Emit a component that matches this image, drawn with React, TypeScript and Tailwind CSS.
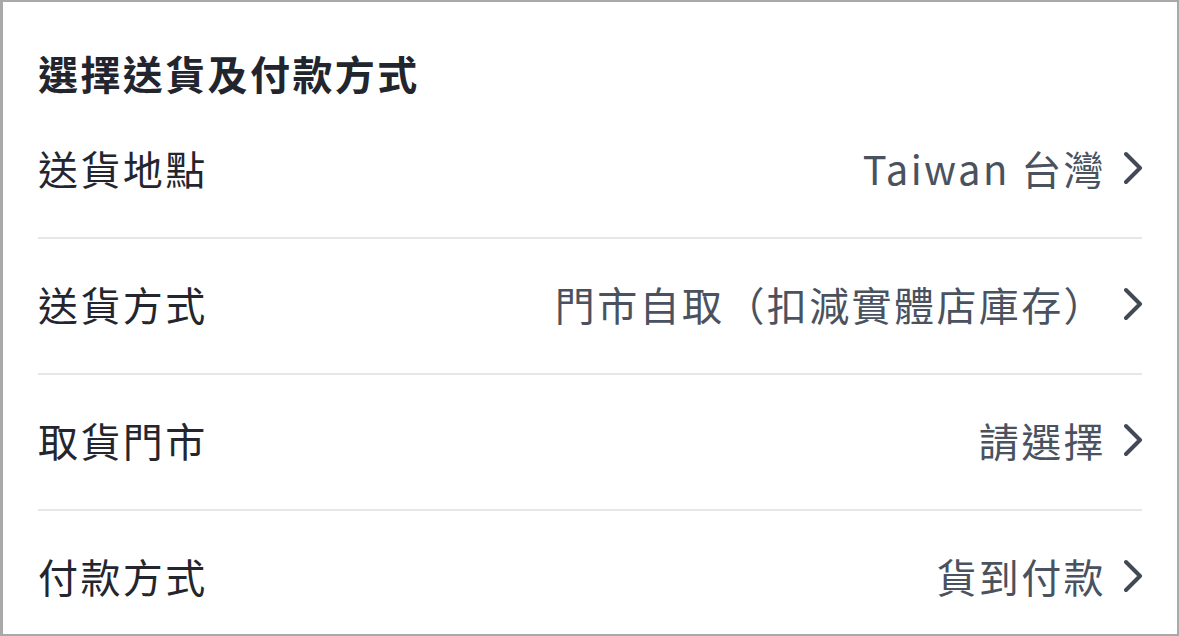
import React from 'react'

const rows = [
  { label: '送貨地點', value: 'Taiwan 台灣' },
  { label: '送貨方式', value: '門市自取（扣減實體店庫存）' },
  { label: '取貨門市', value: '請選擇' },
  { label: '付款方式', value: '貨到付款' },
]

const Chevron: React.FunctionComponent = () => (
  <svg width="20" height="34" viewBox="0 0 20 34" fill="none" className="shrink-0">
    <polyline points="2,3 16,17 2,31" stroke="#434a56" strokeWidth="4" strokeLinecap="round" strokeLinejoin="round" />
  </svg>
)

const App: React.FunctionComponent = () => {
  return (
    <main
      className="w-[1179px] h-[636px] overflow-hidden bg-white border-[#a9a9a9] border-t-2 border-r-2 border-b-2 border-l-[3px] pl-[35px] pr-[33px]"
      style={{ fontFamily: '"Noto Sans CJK TC", "Noto Sans", sans-serif' }}
    >
      <h1 className="pt-[43px] pb-[2px] text-[40px] leading-[56px] font-bold tracking-[2.4px] text-[#22252e]">
        選擇送貨及付款方式
      </h1>
      <div className="flex flex-col">
        {rows.map((row) => (
          <div key={row.label} className="flex items-center justify-between h-[136px] pb-[4px] shrink-0 border-b-2 border-[#e5e7eb] mr-[2px]">
            <span className="text-[40px] tracking-[2.4px] text-[#23262f]">{row.label}</span>
            <div className="flex items-center gap-[18px] -mr-[2px]">
              <span className="text-[40px] tracking-[2.4px] text-[#4a5260]">{row.value}</span>
              <Chevron />
            </div>
          </div>
        ))}
      </div>
    </main>
  )
}

export default App
